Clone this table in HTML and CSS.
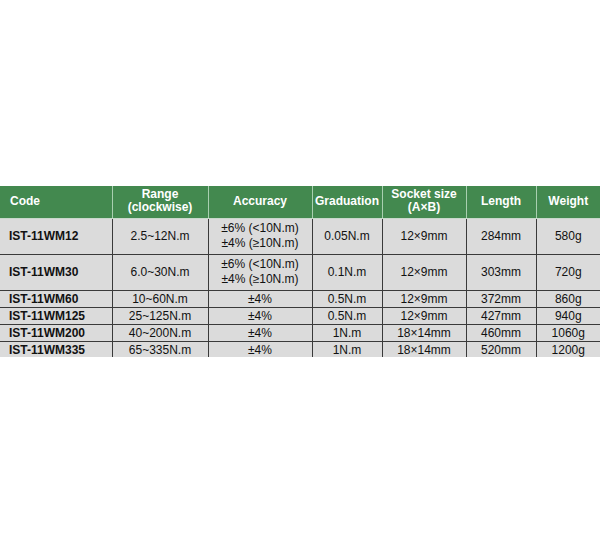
FILE: index.html
```html
<!DOCTYPE html>
<html>
<head>
<meta charset="utf-8">
<link rel="stylesheet" href="styles.css">
</head>
<body>
<div class="page">
<table class="spec">
  <colgroup>
    <col class="c1"><col class="c2"><col class="c3"><col class="c4"><col class="c5"><col class="c6"><col class="c7">
  </colgroup>
  <thead>
    <tr>
      <th class="code">Code</th>
      <th>Range<br>(clockwise)</th>
      <th>Accuracy</th>
      <th>Graduation</th>
      <th>Socket size<br>(A×B)</th>
      <th>Length</th>
      <th>Weight</th>
    </tr>
  </thead>
  <tbody>
    <tr class="tall">
      <td class="code">IST-11WM12</td>
      <td>2.5~12N.m</td>
      <td class="acc">±6% (&lt;10N.m)<br>±4% (≥10N.m)</td>
      <td>0.05N.m</td>
      <td>12×9mm</td>
      <td>284mm</td>
      <td>580g</td>
    </tr>
    <tr class="tall">
      <td class="code">IST-11WM30</td>
      <td>6.0~30N.m</td>
      <td class="acc">±6% (&lt;10N.m)<br>±4% (≥10N.m)</td>
      <td>0.1N.m</td>
      <td>12×9mm</td>
      <td>303mm</td>
      <td>720g</td>
    </tr>
    <tr class="short">
      <td class="code">IST-11WM60</td>
      <td>10~60N.m</td>
      <td>±4%</td>
      <td>0.5N.m</td>
      <td>12×9mm</td>
      <td>372mm</td>
      <td>860g</td>
    </tr>
    <tr class="short">
      <td class="code">IST-11WM125</td>
      <td>25~125N.m</td>
      <td>±4%</td>
      <td>0.5N.m</td>
      <td>12×9mm</td>
      <td>427mm</td>
      <td>940g</td>
    </tr>
    <tr class="short">
      <td class="code">IST-11WM200</td>
      <td>40~200N.m</td>
      <td>±4%</td>
      <td>1N.m</td>
      <td>18×14mm</td>
      <td>460mm</td>
      <td>1060g</td>
    </tr>
    <tr class="short last">
      <td class="code">IST-11WM335</td>
      <td>65~335N.m</td>
      <td>±4%</td>
      <td>1N.m</td>
      <td>18×14mm</td>
      <td>520mm</td>
      <td>1200g</td>
    </tr>
  </tbody>
</table>
</div>
</body>
</html>
```

FILE: styles.css
```css
html, body {
  margin: 0;
  padding: 0;
  background: #ffffff;
}
.page {
  padding-top: 186px;
  width: 600px;
}
.spec {
  width: 600px;
  border-collapse: collapse;
  table-layout: fixed;
  font-family: "Liberation Sans", Arial, sans-serif;
  font-size: 12px;
  color: #111111;
}
.c1 { width: 112px; }
.c2 { width: 96px; }
.c3 { width: 104px; }
.c4 { width: 70px; }
.c5 { width: 84px; }
.c6 { width: 70px; }
.c7 { width: 64px; }

.spec th {
  background: #43894f;
  color: #ffffff;
  font-weight: bold;
  font-size: 12px;
  line-height: 13px;
  height: 30px;
  padding: 0 2px 2px;
  text-align: center;
  vertical-align: middle;
  border-left: 1px solid #a9cfb0;
  border-right: 1px solid #a9cfb0;
  border-bottom: 1px solid #c8d8cb;
}
.spec th:first-child { border-left: none; }
.spec th:last-child { border-right: none; }
.spec th.code {
  text-align: left;
  padding-left: 10px;
}

.spec td {
  background: #dbdbdb;
  text-align: center;
  vertical-align: middle;
  padding: 0 2px;
  border: 1px solid #3a3a3a;
  white-space: nowrap;
}
.spec td:first-child { border-left: none; }
.spec td:last-child { border-right: none; }
.spec td.code {
  text-align: left;
  font-weight: bold;
  padding-left: 9px;
}
.spec tr.tall td {
  height: 34px;
  line-height: 15px;
}
.spec td.acc {
  line-height: 15px;
  padding-bottom: 1px;
}
.spec tr.short td {
  height: 16px;
  line-height: 14px;
}
.spec tr.last td {
  border-bottom: none;
  height: 15px;
}
```
